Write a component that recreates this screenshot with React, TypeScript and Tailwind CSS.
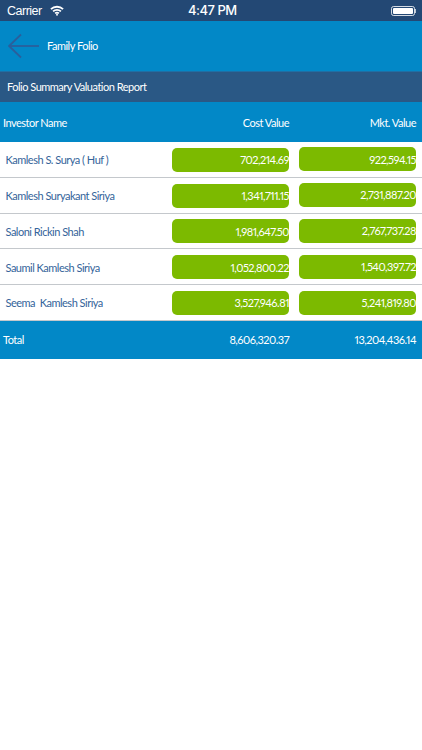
const ROWS = [
  { name: "Kamlesh S. Surya ( Huf )", cost: "702,214.69", mkt: "922,594.15" },
  { name: "Kamlesh Suryakant Siriya", cost: "1,341,711.15", mkt: "2,731,887.20" },
  { name: "Saloni Rickin Shah", cost: "1,981,647.50", mkt: "2,767,737.28" },
  { name: "Saumil Kamlesh Siriya", cost: "1,052,800.22", mkt: "1,540,397.72" },
  { name: "Seema  Kamlesh Siriya", cost: "3,527,946.81", mkt: "5,241,819.80" },
];

function StatusBar() {
  return (
    <div className="relative flex h-[21px] items-center bg-[#234874] pl-[7px] pr-[6px] text-white font-['Liberation_Sans',sans-serif]">
      <span className="pt-[1px] text-[12.5px]">Carrier</span>
      <svg width="14" height="11" viewBox="0 0 15 11" className="ml-[8px]" fill="none" stroke="white" strokeWidth="2">
        <path d="M1 4 C4.6 0.6 10.4 0.6 14 4" />
        <path d="M3.3 6.4 C5.6 4.4 9.4 4.4 11.7 6.4" />
        <path d="M5.5 8.6 C6.6 7.7 8.4 7.7 9.5 8.6" />
        <circle cx="7.5" cy="10" r="1" fill="white" stroke="none" />
      </svg>
      <span className="absolute left-[188px] pt-[1px] font-['Inter',sans-serif] text-[13px] font-medium">4:47 PM</span>
      <div className="ml-auto flex items-center">
        <div className="h-[10px] w-[24px] rounded-[2.5px] border border-white/80 p-[1px]">
          <div className="h-full w-full rounded-[1px] bg-white" />
        </div>
        <div className="h-[4px] w-[1px] bg-white/70" />
      </div>
    </div>
  );
}

export default function App() {
  return (
    <div className="min-h-[750px] bg-white font-['Lato',sans-serif] text-[11px] tracking-[-0.5px] proportional-nums">
      <StatusBar />
      <div className="flex h-[50px] items-center bg-[#0288c7]">
        <svg width="32" height="26" viewBox="0 0 32 26" className="ml-[8px]" fill="none" stroke="#2a5f9c" strokeWidth="1.8">
          <path d="M1 13 H31" />
          <path d="M13 1.5 L1 13 L13 24.5" />
        </svg>
        <span className="ml-[7px] pt-[1px] text-white">Family Folio</span>
      </div>
      <div className="flex h-[31px] items-center border-t border-[#1f6fa5] bg-[#2a5885] pt-[1px] pl-[7px] text-white">
        Folio Summary Valuation Report
      </div>
      <div className="flex h-[40px] items-center bg-[#0288c7] pt-[3px] pl-[3px] pr-[6px] text-white">
        <span className="flex-1">Investor Name</span>
        <span className="w-[117px] text-right">Cost Value</span>
        <span className="ml-[10px] w-[117px] text-right">Mkt. Value</span>
      </div>
      {ROWS.map((row) => (
        <div key={row.name} className="flex h-[35.8px] items-center border-b border-[#c4c8cc] pt-[1px] pl-[5.5px] pr-[6px]">
          <span className="flex-1 whitespace-pre pt-[1px] text-[#34649a]">{row.name}</span>
          <span className="flex h-[24px] w-[117px] items-center justify-end rounded-[5px] bg-[#7cba00] pt-[1px] text-white">{row.cost}</span>
          <span className="ml-[10px] mb-[1px] flex h-[24px] w-[117px] items-center justify-end rounded-[5px] bg-[#7cba00] pt-[1px] text-white">{row.mkt}</span>
        </div>
      ))}
      <div className="flex h-[38px] items-center bg-[#0288c7] pt-[1px] pl-[3px] pr-[6px] text-white">
        <span className="flex-1">Total</span>
        <span className="w-[117px] text-right">8,606,320.37</span>
        <span className="ml-[10px] w-[117px] text-right">13,204,436.14</span>
      </div>
    </div>
  );
}
